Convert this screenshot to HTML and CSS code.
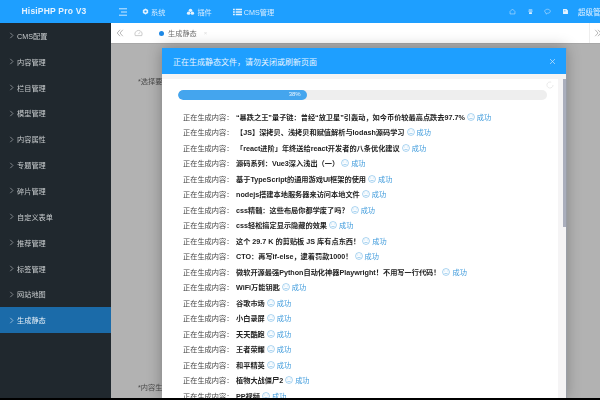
FILE: index.html
```html
<!DOCTYPE html>
<html lang="zh">
<head>
<meta charset="utf-8">
<title>HisiPHP Pro V3</title>
<link rel="stylesheet" href="styles.css">
</head>
<body>
<div class="app">
  <aside class="side">
    <div class="logo">HisiPHP Pro V3</div>
    <nav class="menu">
      <a class="item"><svg class="chev" viewBox="0 0 6 8"><path d="M1.5 .8 4.700 4 1.5 7.200"/></svg>CMS配置</a>
      <a class="item"><svg class="chev" viewBox="0 0 6 8"><path d="M1.5 .8 4.700 4 1.5 7.200"/></svg>内容管理</a>
      <a class="item"><svg class="chev" viewBox="0 0 6 8"><path d="M1.5 .8 4.700 4 1.5 7.200"/></svg>栏目管理</a>
      <a class="item"><svg class="chev" viewBox="0 0 6 8"><path d="M1.5 .8 4.700 4 1.5 7.200"/></svg>模型管理</a>
      <a class="item"><svg class="chev" viewBox="0 0 6 8"><path d="M1.5 .8 4.700 4 1.5 7.200"/></svg>内容属性</a>
      <a class="item"><svg class="chev" viewBox="0 0 6 8"><path d="M1.5 .8 4.700 4 1.5 7.200"/></svg>专题管理</a>
      <a class="item"><svg class="chev" viewBox="0 0 6 8"><path d="M1.5 .8 4.700 4 1.5 7.200"/></svg>碎片管理</a>
      <a class="item"><svg class="chev" viewBox="0 0 6 8"><path d="M1.5 .8 4.700 4 1.5 7.200"/></svg>自定义表单</a>
      <a class="item"><svg class="chev" viewBox="0 0 6 8"><path d="M1.5 .8 4.700 4 1.5 7.200"/></svg>推荐管理</a>
      <a class="item"><svg class="chev" viewBox="0 0 6 8"><path d="M1.5 .8 4.700 4 1.5 7.200"/></svg>标签管理</a>
      <a class="item"><svg class="chev" viewBox="0 0 6 8"><path d="M1.5 .8 4.700 4 1.5 7.200"/></svg>网站地图</a>
      <a class="item active"><svg class="chev" viewBox="0 0 6 8"><path d="M1.5 .8 4.700 4 1.5 7.200"/></svg>生成静态</a>
    </nav>
  </aside>
  <main class="main">
    <header class="top">
      <svg class="burger" viewBox="0 0 8 8"><path d="M0 .8h8M2 4h6M0 7.200h8"/></svg>
      <span class="topnav first"><svg class="tico" viewBox="0 0 10 10"><path d="M5 .6 8.800 2.800v4.400L5 9.400 1.200 7.200V2.800zM5 3.400a1.600 1.600 0 1 0 0 3.200 1.600 1.600 0 0 0 0-3.200z" fill-rule="evenodd"/></svg>系统</span>
      <span class="topnav second"><svg class="tico wide" viewBox="0 0 12 10"><circle cx="3.500" cy="6.500" r="2.300"/><circle cx="8.500" cy="6.500" r="2.300"/><circle cx="6" cy="2.800" r="2.300"/></svg>插件</span>
      <span class="topnav third"><svg class="tico wide" viewBox="0 0 10 8"><path d="M0 .5h2v1.500H0zM3 .5h7v1.500H3zM0 3.200h2v1.500H0zM3 3.200h7v1.500H3zM0 6h2v1.500H0zM3 6h7v1.500H3z"/></svg>CMS管理</span>
      <span class="grow"></span>
      <svg class="rico" viewBox="0 0 10 10"><path d="M1.500 5 5 1.500 8.500 5v3.500h-7z"/></svg>
      <svg class="rico" viewBox="0 0 10 10"><path class="solid" d="M2.500 2h5v1.200h-5zM2 4h6v1h-6zM3 6h4v2.500H3z"/></svg>
      <svg class="rico" viewBox="0 0 10 10"><path d="M5 1.800c2.400 0 4 1.300 4 2.900S7.400 7.500 5 7.500l-2 1.300v-1.700C1.800 6.600 1 5.700 1 4.700 1 3.100 2.600 1.800 5 1.800z"/></svg>
      <svg class="rico" viewBox="0 0 10 10"><path class="solid" d="M1.500 1.500h5l2 2v5h-7zM3 3.500v1h2v-1z" fill-rule="evenodd"/></svg>
      <span class="user">超级管</span>
    </header>
    <div class="tabs">
      <svg class="tabico dbl" viewBox="0 0 10 10"><path d="M5 1 1.500 5 5 9M8.500 1 5 5l3.500 4"/></svg>
      <svg class="tabico gauge" viewBox="0 0 12 10"><path d="M1.700 8.500a4.800 4.800 0 1 1 8.600 0zM6 6.500l2-2.500"/></svg>
      <span class="tab"><i class="dot"></i>生成静态<span class="tabx">×</span></span>
      <span class="grow"></span>
      <span class="more"><svg class="tabico" viewBox="0 0 10 10"><path d="M1.500 1 5 5 1.500 9M5 1l3.500 4L5 9"/></svg></span>
    </div>
    <section class="content">
      <p class="field">*选择要生成的栏目</p>
      <p class="field">*内容生成数量</p>
    </section>
  </main>
</div>
<div class="modal">
  <div class="mhead"><span>正在生成静态文件，请勿关闭或刷新页面</span><svg class="close" viewBox="0 0 8 8"><path d="M1.200 1.200l5.600 5.600M6.800 1.200 1.200 6.800"/></svg></div>
  <div class="mbody">
    <div class="scroll"><div class="thumb"></div></div>
    <svg class="spin" viewBox="0 0 10 10"><path d="M8.800 5A3.800 3.800 0 1 1 6.500 1.500"/></svg>
    <div class="progress"><div class="bar"><span>38%</span></div></div>
    <ul class="log">
      <li><span>正在生成内容：</span><b>“暴跌之王”量子链：曾经“放卫星”引轰动，如今币价较最高点跌去97.7%</b><svg class="face" viewBox="0 0 10 10"><circle cx="5" cy="5" r="4.300"/><path d="M3 3.800h1M6 3.800h1M3 6.800h4"/></svg><em>成功</em></li>
      <li><span>正在生成内容：</span><b>【JS】深拷贝、浅拷贝和赋值解析与lodash源码学习</b><svg class="face" viewBox="0 0 10 10"><circle cx="5" cy="5" r="4.300"/><path d="M3 3.800h1M6 3.800h1M3 6.800h4"/></svg><em>成功</em></li>
      <li><span>正在生成内容：</span><b>「react进阶」年终送给react开发者的八条优化建议</b><svg class="face" viewBox="0 0 10 10"><circle cx="5" cy="5" r="4.300"/><path d="M3 3.800h1M6 3.800h1M3 6.800h4"/></svg><em>成功</em></li>
      <li><span>正在生成内容：</span><b>源码系列：Vue3深入浅出（一）</b><svg class="face" viewBox="0 0 10 10"><circle cx="5" cy="5" r="4.300"/><path d="M3 3.800h1M6 3.800h1M3 6.800h4"/></svg><em>成功</em></li>
      <li><span>正在生成内容：</span><b>基于TypeScript的通用游戏UI框架的使用</b><svg class="face" viewBox="0 0 10 10"><circle cx="5" cy="5" r="4.300"/><path d="M3 3.800h1M6 3.800h1M3 6.800h4"/></svg><em>成功</em></li>
      <li><span>正在生成内容：</span><b>nodejs搭建本地服务器来访问本地文件</b><svg class="face" viewBox="0 0 10 10"><circle cx="5" cy="5" r="4.300"/><path d="M3 3.800h1M6 3.800h1M3 6.800h4"/></svg><em>成功</em></li>
      <li><span>正在生成内容：</span><b>css精髓：这些布局你都学废了吗？</b><svg class="face" viewBox="0 0 10 10"><circle cx="5" cy="5" r="4.300"/><path d="M3 3.800h1M6 3.800h1M3 6.800h4"/></svg><em>成功</em></li>
      <li><span>正在生成内容：</span><b>css轻松搞定显示隐藏的效果</b><svg class="face" viewBox="0 0 10 10"><circle cx="5" cy="5" r="4.300"/><path d="M3 3.800h1M6 3.800h1M3 6.800h4"/></svg><em>成功</em></li>
      <li><span>正在生成内容：</span><b>这个 29.7 K 的剪贴板 JS 库有点东西！</b><svg class="face" viewBox="0 0 10 10"><circle cx="5" cy="5" r="4.300"/><path d="M3 3.800h1M6 3.800h1M3 6.800h4"/></svg><em>成功</em></li>
      <li><span>正在生成内容：</span><b>CTO：再写if-else，逮着罚款1000！</b><svg class="face" viewBox="0 0 10 10"><circle cx="5" cy="5" r="4.300"/><path d="M3 3.800h1M6 3.800h1M3 6.800h4"/></svg><em>成功</em></li>
      <li><span>正在生成内容：</span><b>微软开源最强Python自动化神器Playwright！不用写一行代码！</b><svg class="face" viewBox="0 0 10 10"><circle cx="5" cy="5" r="4.300"/><path d="M3 3.800h1M6 3.800h1M3 6.800h4"/></svg><em>成功</em></li>
      <li><span>正在生成内容：</span><b>WiFi万能钥匙</b><svg class="face" viewBox="0 0 10 10"><circle cx="5" cy="5" r="4.300"/><path d="M3 3.800h1M6 3.800h1M3 6.800h4"/></svg><em>成功</em></li>
      <li><span>正在生成内容：</span><b>谷歌市场</b><svg class="face" viewBox="0 0 10 10"><circle cx="5" cy="5" r="4.300"/><path d="M3 3.800h1M6 3.800h1M3 6.800h4"/></svg><em>成功</em></li>
      <li><span>正在生成内容：</span><b>小白录屏</b><svg class="face" viewBox="0 0 10 10"><circle cx="5" cy="5" r="4.300"/><path d="M3 3.800h1M6 3.800h1M3 6.800h4"/></svg><em>成功</em></li>
      <li><span>正在生成内容：</span><b>天天酷跑</b><svg class="face" viewBox="0 0 10 10"><circle cx="5" cy="5" r="4.300"/><path d="M3 3.800h1M6 3.800h1M3 6.800h4"/></svg><em>成功</em></li>
      <li><span>正在生成内容：</span><b>王者荣耀</b><svg class="face" viewBox="0 0 10 10"><circle cx="5" cy="5" r="4.300"/><path d="M3 3.800h1M6 3.800h1M3 6.800h4"/></svg><em>成功</em></li>
      <li><span>正在生成内容：</span><b>和平精英</b><svg class="face" viewBox="0 0 10 10"><circle cx="5" cy="5" r="4.300"/><path d="M3 3.800h1M6 3.800h1M3 6.800h4"/></svg><em>成功</em></li>
      <li><span>正在生成内容：</span><b>植物大战僵尸2</b><svg class="face" viewBox="0 0 10 10"><circle cx="5" cy="5" r="4.300"/><path d="M3 3.800h1M6 3.800h1M3 6.800h4"/></svg><em>成功</em></li>
      <li><span>正在生成内容：</span><b>PP视频</b><svg class="face" viewBox="0 0 10 10"><circle cx="5" cy="5" r="4.300"/><path d="M3 3.800h1M6 3.800h1M3 6.800h4"/></svg><em>成功</em></li>
    </ul>
  </div>
</div>
</body>
</html>
```
FILE: styles.css
```css
* { box-sizing: border-box; }
html, body { margin: 0; height: 100%; overflow: hidden; background: #000; }
body { font-family: "Liberation Sans", "Noto Sans CJK SC", sans-serif; font-size: 7.2px; position: relative; }
svg { display: block; flex: none; }
.app { display: flex; height: 398px; overflow: hidden; filter: blur(.3px); }
.side { width: 111px; flex: none; background: #20282e; color: #c8ccce; }
.logo { height: 23px; padding-right: 3px; background: #1e9fff; color: #e3f2ff; font-size: 8.500px; font-weight: 700; text-align: center; line-height: 23px; letter-spacing: .2px; }
.menu { display: flex; flex-direction: column; }
.item { height: 25.850px; display: flex; align-items: center; padding-left: 9px; gap: 3px; }
.chev { width: 5px; height: 7px; fill: none; stroke: currentColor; stroke-width: .7; }
.item.active { background: #1b6ba9; color: #e4eef6; }
.main { flex: 1; min-width: 0; display: flex; flex-direction: column; background: #b2b2b2; }
.top { height: 23px; flex: none; display: flex; align-items: center; background: #1e9fff; color: #d6ecff; padding-left: 8px; }
.burger { width: 8px; height: 8px; fill: none; stroke: #e3f2ff; stroke-width: .9; }
.topnav { display: flex; align-items: center; gap: 2px; }
.topnav.first { margin-left: 15px; }
.topnav.second { margin-left: 21px; }
.topnav.third { margin-left: 21px; }
.tico { width: 7px; height: 7px; fill: #e3f2ff; }
.tico.wide { width: 9px; height: 8px; }
.grow { flex: 1; }
.rico { width: 7px; height: 7px; margin-right: 10.500px; fill: none; stroke: #cfe8fc; stroke-width: .8; }
.rico .solid { fill: #e3f2ff; stroke: none; }
.user { color: #e3f2ff; white-space: nowrap; width: 22px; overflow: hidden; margin-left: -1px; flex: none; font-size: 7.500px; }
.tabs { height: 21px; flex: none; display: flex; align-items: center; background: #fff; border-bottom: 1px solid #a7a7a7; padding-left: 5px; color: #8b8b8b; }
.tabico { width: 8px; height: 8px; fill: none; stroke: #8f8f8f; stroke-width: .8; }
.gauge { width: 9px; height: 8px; margin-left: 10px; stroke: #aaa; }
.tab { display: flex; align-items: center; gap: 3px; margin-left: 16px; color: #6f6f6f; }
.dot { width: 5px; height: 5px; border-radius: 50%; background: #1e88e5; margin-right: 1px; }
.tabx { color: #ddd; font-size: 6px; margin-left: 4px; }
.more { width: 11px; height: 20px; border-left: 1px solid #eee; display: flex; align-items: center; padding-left: 4px; flex: none; }
.content { flex: 1; display: flex; flex-direction: column; justify-content: space-between; padding: 32px 0 6px 27px; color: #4a4a4a; background: #b2b2b2; }
.field { margin: 0; }
.modal { position: absolute; left: 162px; top: 48px; width: 404px; height: 350px; background: #fff; box-shadow: 1px 0 1px #9a9ea6, 0 0 14px rgba(0,0,0,.3); clip-path: inset(-20px -20px 0 -20px); filter: blur(.3px); }
.mhead { height: 26px; background: #1e9fff; color: #e8f5ff; display: flex; align-items: center; justify-content: space-between; padding: 0 10px 0 11px; font-size: 8px; }
.close { width: 7px; height: 7px; fill: none; stroke: #cfe8fc; stroke-width: .8; }
.mbody { position: relative; height: 324px; border-top: 5px solid #f4f4f4; padding: 11px 0 0 15.500px; overflow: hidden; }
.scroll { position: absolute; right: 0; top: -5px; bottom: 0; width: 8px; background: #f5f4f5; }
.thumb { width: 3px; height: 153px; margin-left: 5px; background: #aaaebc; }
.spin { position: absolute; right: 12px; top: 2px; width: 8px; height: 8px; fill: none; stroke: #e4e4e4; stroke-width: 1; }
.progress { width: 369px; height: 9.500px; border-radius: 5px; background: #eee; overflow: hidden; }
.bar { width: 35%; height: 100%; background: #44a5ee; border-radius: 5px; color: #e8f5ff; font-size: 6px; line-height: 9.500px; text-align: right; padding-right: 6px; }
.log { list-style: none; margin: 9.500px 0 0; padding: 0 0 0 5.500px; }
.log li { height: 15.500px; display: flex; align-items: center; white-space: nowrap; color: #444; }
.log b { font-weight: 700; color: #222; }
.log span { width: 53px; flex: none; }
.face { width: 8px; height: 8px; margin: 0 2px; fill: none; stroke: #4aa3df; stroke-width: .6; }
.log em { font-style: normal; color: #3f9bdc; }
```
